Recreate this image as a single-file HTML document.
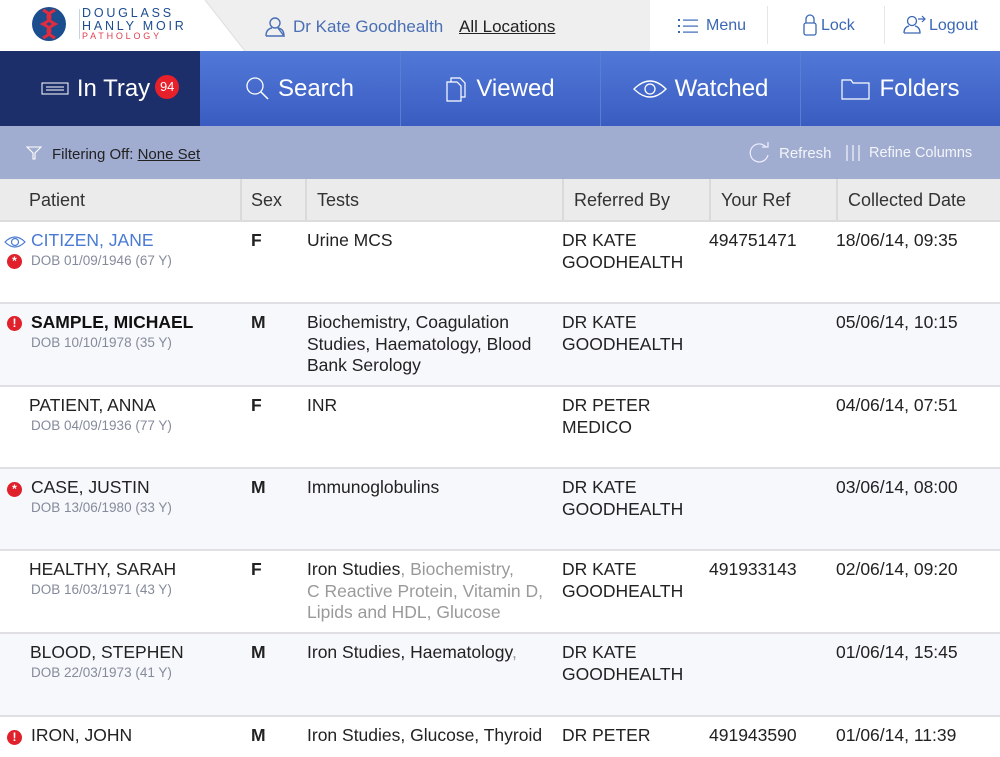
<!DOCTYPE html>
<html><head><meta charset="utf-8"><style>
*{margin:0;padding:0;box-sizing:border-box}
body{width:1000px;height:750px;overflow:hidden;font-family:"Liberation Sans",Arial,sans-serif;background:#fff;position:relative;color:#222}
.abs{position:absolute}
#hdr{top:0;left:0;width:1000px;height:51px;background:#efefef}
#nav{top:51px;left:0;width:1000px;height:75px;background:linear-gradient(#5179d8,#3a5cc1)}
.tab{position:absolute;top:0;height:75px;color:#fff;font-size:24px;display:flex;align-items:center;justify-content:center;border-left:1px solid #5a7ed2}
#filter{top:126px;left:0;width:1000px;height:53px;background:#a1add0}
#th{top:179px;left:0;width:1000px;height:43px;background:#ebebeb;border-bottom:2px solid #dcdcdc}
.thc{position:absolute;top:0;height:41px;line-height:43px;font-size:18px;color:#333;border-left:2px solid #dadada;padding-left:10px}
.row{position:absolute;left:0;width:1000px;border-bottom:2px solid #e0e0e4}
.row .c{position:absolute;top:8px;font-size:17.5px;line-height:21.5px;color:#222}
.nm{left:30px}
.dob{position:absolute;left:31px;top:31px;font-size:13.5px;color:#858b9c}
.sx{left:251px;font-weight:bold}
.ts{left:307px;width:250px}
.rf{left:562px}
.yr{left:709px}
.dt{left:836px}
.ic{position:absolute;left:7px;width:15px;height:15px;border-radius:50%;background:#e0202a;color:#fff;font-size:12px;font-weight:bold;text-align:center;line-height:15px}
.g{color:#9a9a9a}
</style></head><body>
<div id="hdr" class="abs">
 <svg class="abs" style="left:0;top:0" width="260" height="51"><polygon points="0,0 205,0 245,51 0,51" fill="#fff"/><line x1="205" y1="0" x2="245" y2="51" stroke="#ddd"/></svg>
 <div class="abs" style="left:32px;top:7px;width:34px;height:34px;border-radius:50%;background:#1c4d8f;overflow:hidden">
  <svg width="34" height="34"><path d="M11 3 Q25 10 11 17 Q25 24 11 31" stroke="#e22b3c" stroke-width="3" fill="none"/><path d="M23 3 Q9 10 23 17 Q9 24 23 31" stroke="#e22b3c" stroke-width="3" fill="none"/></svg>
 </div>
 <div class="abs" style="left:79px;top:9px;width:1px;height:30px;background:#c9d3e0"></div>
 <div class="abs" style="left:82px;top:7px;font-size:12.5px;letter-spacing:2.8px;color:#1c4d8f;line-height:13px">DOUGLASS<br>HANLY MOIR</div>
 <div class="abs" style="left:82px;top:31px;font-size:9px;letter-spacing:2.8px;color:#e04050">PATHOLOGY</div>
 <svg class="abs" style="left:265px;top:17px" width="20" height="20"><circle cx="10" cy="6" r="5" fill="none" stroke="#4a6fb5" stroke-width="1.4"/><path d="M1 19 Q1 12 7 11 M13 11 Q19 12 19 19 Z M1 19 H19" fill="none" stroke="#4a6fb5" stroke-width="1.4"/></svg>
 <div class="abs" style="left:293px;top:17px;font-size:17px;color:#4a6fb5">Dr Kate Goodhealth</div>
 <div class="abs" style="left:459px;top:17px;font-size:17px;color:#222;text-decoration:underline">All Locations</div>
 <div class="abs" style="left:650px;top:0;width:350px;height:51px;background:#fff"></div>
 <div class="abs" style="left:767px;top:6px;width:1px;height:38px;background:#e6e6e6"></div>
 <div class="abs" style="left:884px;top:6px;width:1px;height:38px;background:#e6e6e6"></div>
 <svg class="abs" style="left:678px;top:19px" width="20" height="14"><g fill="#3a67b5"><rect x="0" y="0" width="2" height="2"/><rect x="0" y="6" width="2" height="2"/><rect x="0" y="12" width="2" height="2"/><rect x="5" y="0.5" width="15" height="1.2"/><rect x="5" y="6.5" width="15" height="1.2"/><rect x="5" y="12.5" width="15" height="1.2"/></g></svg>
 <div class="abs" style="left:706px;top:17px;font-size:16px;color:#3a67b5">Menu</div>
 <svg class="abs" style="left:803px;top:14px" width="14" height="22"><path d="M3 9 V5 A4 4 0 0 1 11 5 V9" fill="none" stroke="#3a67b5" stroke-width="1.3"/><rect x="1" y="9" width="12" height="12" rx="2" fill="none" stroke="#3a67b5" stroke-width="1.3"/></svg>
 <div class="abs" style="left:821px;top:17px;font-size:16px;color:#3a67b5">Lock</div>
 <svg class="abs" style="left:903px;top:15px" width="24" height="20"><circle cx="9" cy="6" r="4.5" fill="none" stroke="#3a67b5" stroke-width="1.3"/><path d="M1 18 Q1 12 6 11 M12 11 Q17 12 17 18 H1" fill="none" stroke="#3a67b5" stroke-width="1.3"/><path d="M15 4 H22 M19 1 L22 4 L19 7" fill="none" stroke="#3a67b5" stroke-width="1.2"/></svg>
 <div class="abs" style="left:929px;top:17px;font-size:16px;color:#3a67b5">Logout</div>
</div>
<div id="nav" class="abs">
 <div class="tab" style="left:0;width:200px;background:#1c2f6a;border:none;padding-left:20px">
  <svg width="28" height="14" style="margin-right:8px"><rect x="1" y="1" width="26" height="11" fill="none" stroke="#fff" stroke-width="1"/><path d="M5 5 H23 M5 8 H23" stroke="#fff"/></svg>In Tray
  <span style="display:inline-block;width:24px;height:24px;border-radius:50%;background:#e8202a;font-size:13px;line-height:24px;text-align:center;margin-left:5px;margin-top:-4px">94</span></div>
 <div class="tab" style="left:200px;width:200px;border:none"><svg width="24" height="24" style="margin-right:8px"><circle cx="9" cy="9" r="8" fill="none" stroke="#fff" stroke-width="1.3"/><path d="M15 15 L22 22" stroke="#fff" stroke-width="1.5"/></svg>Search</div>
 <div class="tab" style="left:400px;width:200px"><svg width="22" height="26" style="margin-right:8px"><path d="M1 6 H11 L15 10 V25 H1 Z" fill="none" stroke="#fff" stroke-width="1.2"/><path d="M5 6 V2 H14 L19 7 V21 H15" fill="none" stroke="#fff" stroke-width="1.2"/></svg>Viewed</div>
 <div class="tab" style="left:600px;width:200px"><svg width="34" height="20" style="margin-right:8px"><path d="M1 10 Q17 -6 33 10 Q17 26 1 10 Z" fill="none" stroke="#fff" stroke-width="1.3"/><circle cx="17" cy="10" r="5" fill="none" stroke="#fff" stroke-width="1.3"/></svg>Watched</div>
 <div class="tab" style="left:800px;width:200px"><svg width="30" height="24" style="margin-right:8px"><path d="M1 3 H10 L12 6 H28 V22 H1 Z" fill="none" stroke="#fff" stroke-width="1.2"/></svg>Folders</div>
</div>
<div id="filter" class="abs">
 <svg class="abs" style="left:26px;top:20px" width="16" height="14"><path d="M1 1 H15 L9 7 V13 H7 V7 Z" fill="none" stroke="#fff" stroke-width="1.1"/></svg>
 <div class="abs" style="left:52px;top:20px;font-size:15px;color:#222">Filtering Off: <u>None Set</u></div>
 <svg class="abs" style="left:748px;top:16px" width="24" height="22"><path d="M18 5 A9 9 0 1 0 20 13" fill="none" stroke="#eef" stroke-width="1.2"/><path d="M14 5 H20 V0" fill="none" stroke="#eef" stroke-width="1.2"/></svg>
 <div class="abs" style="left:779px;top:19px;font-size:15px;color:#f3f5fb">Refresh</div>
 <svg class="abs" style="left:846px;top:18px" width="16" height="18"><path d="M1 1 V17 M7 1 V17 M13 1 V17" stroke="#f3f5fb" stroke-width="1.2"/></svg>
 <div class="abs" style="left:869px;top:19px;font-size:14.5px;color:#f3f5fb">Refine Columns</div>
</div>
<div id="th" class="abs">
 <div class="thc" style="left:0;border:none;padding-left:29px">Patient</div>
 <div class="thc" style="left:240px;padding-left:9px">Sex</div>
 <div class="thc" style="left:305px;padding-left:10px">Tests</div>
 <div class="thc" style="left:562px">Referred By</div>
 <div class="thc" style="left:709px">Your Ref</div>
 <div class="thc" style="left:836px">Collected Date</div>
</div>

<div class="row" style="top:222px;height:82px;background:#fff">
 <svg class="abs" style="left:4px;top:13px" width="22" height="14"><path d="M1 7 Q11 -3 21 7 Q11 17 1 7 Z" fill="none" stroke="#4a7bd4" stroke-width="1.2"/><circle cx="11" cy="7" r="3.5" fill="none" stroke="#4a7bd4" stroke-width="1.2"/></svg>
 <div class="c nm" style="left:31px;color:#4a7bd4">CITIZEN, JANE</div><div class="ic" style="top:32px">*</div><div class="dob">DOB 01/09/1946 (67 Y)</div>
 <div class="c sx">F</div><div class="c ts">Urine MCS</div><div class="c rf">DR KATE<br>GOODHEALTH</div><div class="c yr">494751471</div><div class="c dt">18/06/14, 09:35</div>
</div>
<div class="row" style="top:304px;height:83px;background:#f7f8fb">
 <div class="ic" style="top:12px">!</div><div class="c nm" style="left:31px;font-weight:bold;color:#111">SAMPLE, MICHAEL</div><div class="dob">DOB 10/10/1978 (35 Y)</div>
 <div class="c sx">M</div><div class="c ts">Biochemistry, Coagulation<br>Studies, Haematology, Blood<br>Bank Serology</div><div class="c rf">DR KATE<br>GOODHEALTH</div><div class="c dt">05/06/14, 10:15</div>
</div>
<div class="row" style="top:387px;height:82px;background:#fff">
 <div class="c nm" style="left:29px">PATIENT, ANNA</div><div class="dob">DOB 04/09/1936 (77 Y)</div>
 <div class="c sx">F</div><div class="c ts">INR</div><div class="c rf">DR PETER<br>MEDICO</div><div class="c dt">04/06/14, 07:51</div>
</div>
<div class="row" style="top:469px;height:82px;background:#f7f8fb">
 <div class="ic" style="top:13px">*</div><div class="c nm" style="left:31px">CASE, JUSTIN</div><div class="dob">DOB 13/06/1980 (33 Y)</div>
 <div class="c sx">M</div><div class="c ts">Immunoglobulins</div><div class="c rf">DR KATE<br>GOODHEALTH</div><div class="c dt">03/06/14, 08:00</div>
</div>
<div class="row" style="top:551px;height:83px;background:#fff">
 <div class="c nm" style="left:29px">HEALTHY, SARAH</div><div class="dob">DOB 16/03/1971 (43 Y)</div>
 <div class="c sx">F</div><div class="c ts" style="width:260px">Iron Studies<span class="g">, Biochemistry,<br>C Reactive Protein, Vitamin D,<br>Lipids and HDL, Glucose</span></div><div class="c rf">DR KATE<br>GOODHEALTH</div><div class="c yr">491933143</div><div class="c dt">02/06/14, 09:20</div>
</div>
<div class="row" style="top:634px;height:83px;background:#f7f8fb">
 <div class="c nm" style="left:30px">BLOOD, STEPHEN</div><div class="dob">DOB 22/03/1973 (41 Y)</div>
 <div class="c sx">M</div><div class="c ts">Iron Studies, Haematology<span class="g">,</span></div><div class="c rf">DR KATE<br>GOODHEALTH</div><div class="c dt">01/06/14, 15:45</div>
</div>
<div class="row" style="top:717px;height:40px;background:#fff;border:none">
 <div class="ic" style="top:13px">!</div><div class="c nm" style="left:31px">IRON, JOHN</div>
 <div class="c sx">M</div><div class="c ts" style="width:300px">Iron Studies, Glucose, Thyroid</div><div class="c rf">DR PETER</div><div class="c yr">491943590</div><div class="c dt">01/06/14, 11:39</div>
</div>
</body></html>
